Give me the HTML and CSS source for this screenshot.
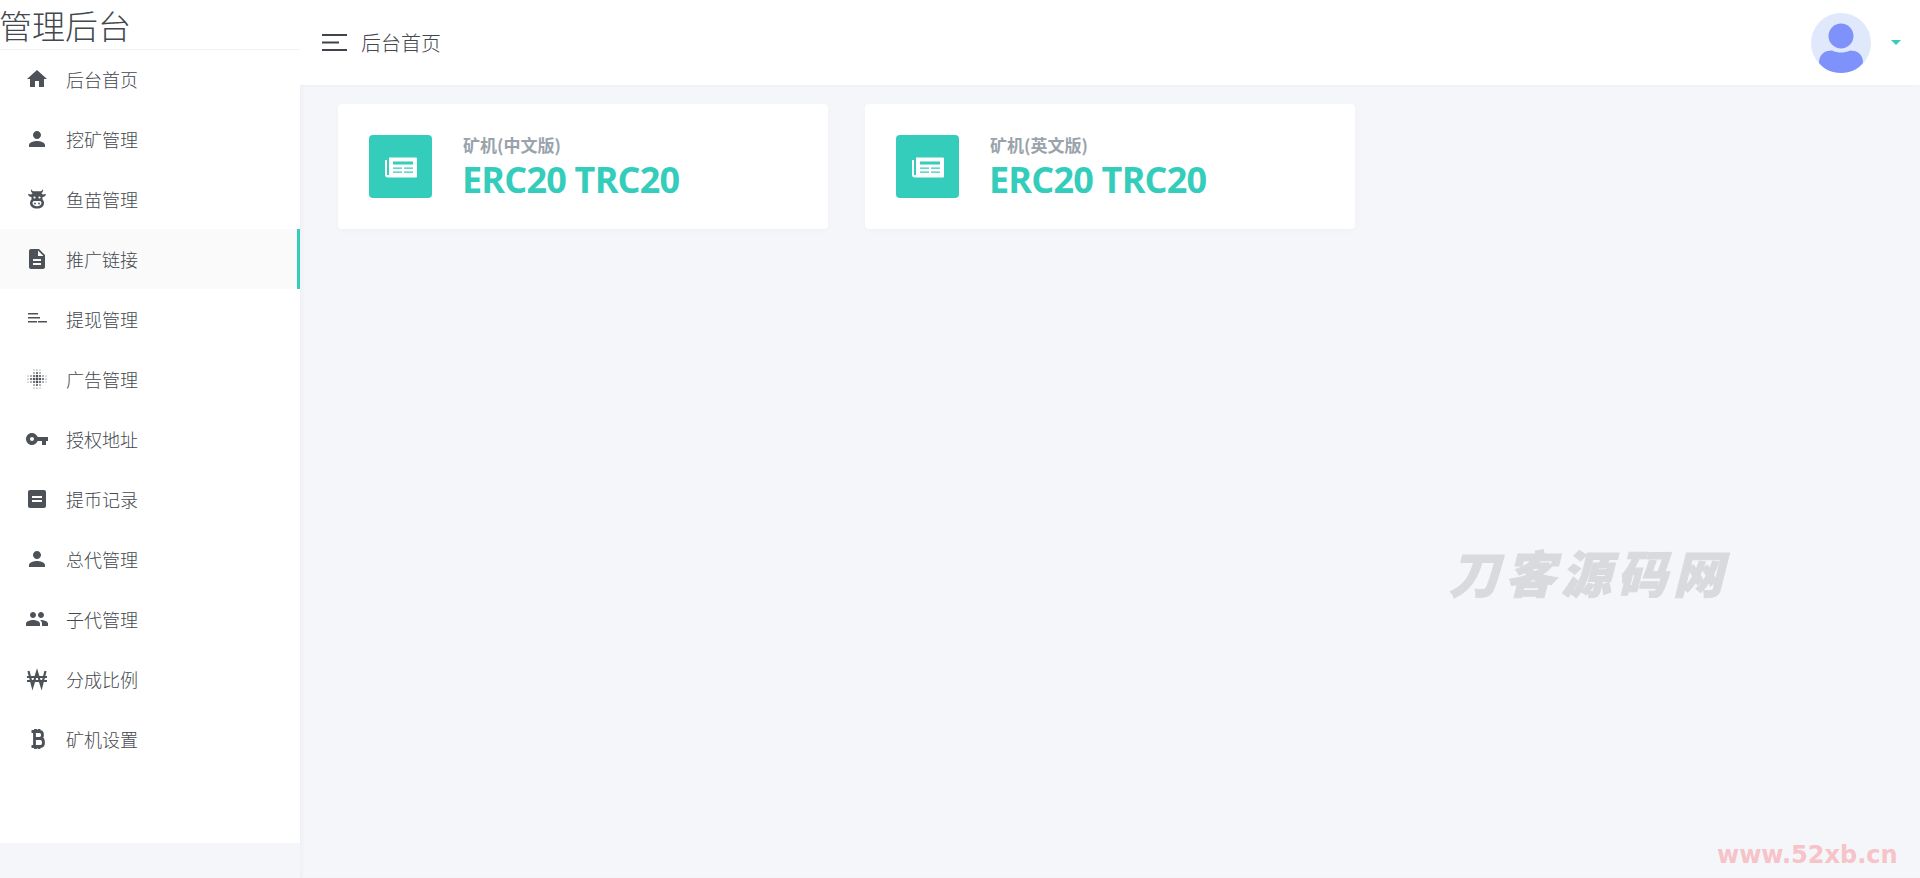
FILE: index.html

```html
<!DOCTYPE html>
<html lang="zh-CN">
<head>
  <meta charset="UTF-8">
  <title>管理后台</title>
  <link rel="stylesheet" href="styles.css">
</head>
<body>
  <aside class="sidebar">
    <div class="logo">管理后台</div>
    <ul class="menu">
      <li class="menu-item">
        <svg class="menu-icon" viewBox="0 0 24 24"><path d="M10 20v-6h4v6h5v-8h3L12 3 2 12h3v8z"/></svg>
        <span>后台首页</span>
      </li>
      <li class="menu-item">
        <svg class="menu-icon" viewBox="0 0 24 24"><path d="M12 12c2.21 0 4-1.79 4-4s-1.79-4-4-4-4 1.79-4 4 1.79 4 4 4zm0 2c-2.67 0-8 1.34-8 4v2h16v-2c0-2.66-5.33-4-8-4z"/></svg>
        <span>挖矿管理</span>
      </li>
      <li class="menu-item">
        <svg class="menu-icon" viewBox="0 0 24 24"><path d="M6 2c-.4 2 .2 3.400 1.800 4.400h8.400C17.800 5.400 18.400 4 18 2c-.5 1.200-1.300 1.900-2.500 2.200h-7C7.300 3.900 6.500 3.200 6 2zM3 7c.3 1.800 1.500 2.900 3.500 3V7.500zM21 7c-.3 1.800-1.500 2.900-3.500 3V7.500zM7.500 6.500h9c.6 0 1 .4 1 1v5c1 1 1.500 2.300 1.500 3.700 0 3-2.800 5.300-7 5.300s-7-2.300-7-5.300c0-1.400.5-2.700 1.500-3.700v-5c0-.6.4-1 1-1zM8.600 14c-.7.500-1.100 1.200-1.100 2.100 0 1.900 1.900 3.200 4.500 3.200s4.500-1.300 4.500-3.200c0-.9-.4-1.600-1.100-2.100z"/><circle cx="9.500" cy="10.500" r="1.100" fill="#fff"/><circle cx="14.500" cy="10.500" r="1.100" fill="#fff"/><circle cx="10" cy="16.500" r=".9"/><circle cx="14" cy="16.500" r=".9"/></svg>
        <span>鱼苗管理</span>
      </li>
      <li class="menu-item active">
        <svg class="menu-icon" viewBox="0 0 24 24"><path d="M14 2H6c-1.100 0-1.990.9-1.990 2L4 20c0 1.100.89 2 1.990 2H18c1.100 0 2-.9 2-2V8l-6-6zm2 16H8v-2h8v2zm0-4H8v-2h8v2zm-3-5V3.500L18.500 9H13z"/></svg>
        <span>推广链接</span>
      </li>
      <li class="menu-item">
        <svg class="menu-icon" viewBox="0 0 24 24"><path d="M3 6h10v1.600H3zM3 10h12v1.600H3zM3 14h9v1.600H3zM13 14h9v1.600h-9z"/></svg>
        <span>提现管理</span>
      </li>
      <li class="menu-item">
        <svg class="menu-icon" viewBox="0 0 24 24"><g class="dots"><circle cx="12" cy="12" r="1.400"/><circle cx="9" cy="12" r="1.300"/><circle cx="15" cy="12" r="1.300"/><circle cx="12" cy="9" r="1.300"/><circle cx="12" cy="15" r="1.300"/><circle cx="9" cy="9" r="1.100"/><circle cx="15" cy="9" r="1.100"/><circle cx="9" cy="15" r="1.100"/><circle cx="15" cy="15" r="1.100"/><circle cx="6" cy="12" r="1"/><circle cx="18" cy="12" r="1"/><circle cx="12" cy="6" r="1"/><circle cx="12" cy="18" r="1"/><circle cx="6" cy="9" r=".8"/><circle cx="18" cy="9" r=".8"/><circle cx="6" cy="15" r=".8"/><circle cx="18" cy="15" r=".8"/><circle cx="9" cy="6" r=".8"/><circle cx="15" cy="6" r=".8"/><circle cx="9" cy="18" r=".8"/><circle cx="15" cy="18" r=".8"/><circle cx="3" cy="12" r=".6"/><circle cx="21" cy="12" r=".6"/><circle cx="12" cy="3" r=".6"/><circle cx="12" cy="21" r=".6"/><circle cx="3" cy="9" r=".5"/><circle cx="21" cy="9" r=".5"/><circle cx="3" cy="15" r=".5"/><circle cx="21" cy="15" r=".5"/><circle cx="9" cy="3" r=".5"/><circle cx="15" cy="3" r=".5"/><circle cx="9" cy="21" r=".5"/><circle cx="15" cy="21" r=".5"/></g></svg>
        <span>广告管理</span>
      </li>
      <li class="menu-item">
        <svg class="menu-icon" viewBox="0 0 24 24"><path d="M12.650 10C11.830 7.670 9.610 6 7 6c-3.310 0-6 2.690-6 6s2.690 6 6 6c2.610 0 4.830-1.670 5.650-4H17v4h4v-4h2v-4H12.650zM7 14c-1.100 0-2-.9-2-2s.9-2 2-2 2 .9 2 2-.9 2-2 2z"/></svg>
        <span>授权地址</span>
      </li>
      <li class="menu-item">
        <svg class="menu-icon" viewBox="0 0 24 24"><path d="M19 3H5c-1.100 0-2 .9-2 2v14c0 1.100.9 2 2 2h14c1.100 0 2-.9 2-2V5c0-1.100-.9-2-2-2zm-2 12H7v-2h10v2zm0-4H7V9h10v2z"/></svg>
        <span>提币记录</span>
      </li>
      <li class="menu-item">
        <svg class="menu-icon" viewBox="0 0 24 24"><path d="M12 12c2.210 0 4-1.790 4-4s-1.790-4-4-4-4 1.790-4 4 1.790 4 4 4zm0 2c-2.670 0-8 1.340-8 4v2h16v-2c0-2.660-5.330-4-8-4z"/></svg>
        <span>总代管理</span>
      </li>
      <li class="menu-item">
        <svg class="menu-icon" viewBox="0 0 24 24"><path d="M16 11c1.660 0 2.990-1.340 2.990-3S17.660 5 16 5c-1.660 0-3 1.340-3 3s1.340 3 3 3zm-8 0c1.660 0 2.990-1.340 2.990-3S9.660 5 8 5C6.340 5 5 6.340 5 8s1.340 3 3 3zm0 2c-2.330 0-7 1.170-7 3.500V19h14v-2.500c0-2.330-4.670-3.500-7-3.500zm8 0c-.29 0-.62.02-.97.05 1.160.84 1.970 1.970 1.970 3.450V19h6v-2.500c0-2.330-4.670-3.500-7-3.500z"/></svg>
        <span>子代管理</span>
      </li>
      <li class="menu-item">
        <svg class="menu-icon" viewBox="0 0 24 24"><path class="line" d="M3.500 4l4 15.500L12 5l4.500 14.500 4-15.500M2 10h20M2 14h20"/></svg>
        <span>分成比例</span>
      </li>
      <li class="menu-item">
        <svg class="menu-icon" viewBox="0 0 24 24"><path class="line thick" d="M9.500 4.500v15M6.500 4.500h8c4 0 4 7 0 7h-5 6c4 0 4 8 0 8h-9M10.500 2v2.500M14 2v2.500M10.500 19.500V22M14 19.500V22"/></svg>
        <span>矿机设置</span>
      </li>
    </ul>
  </aside>

  <div class="main">
    <header class="topbar">
      <div class="topbar-left">
        <svg class="burger" viewBox="0 0 25 17"><path d="M0 1h25M0 8.500h17M0 16h25"/></svg>
        <span class="crumb">后台首页</span>
      </div>
      <div class="topbar-right">
        <svg class="avatar" viewBox="0 0 60 60">
          <circle cx="30" cy="30" r="30" fill="#e0e9fb"/>
          <circle cx="30" cy="23" r="12.500" fill="#7f92fb"/>
          <path d="M8 50c0-10 7-12.500 13-12.500 3 1.500 6 2 9 2s6-.5 9-2c6 0 13 2.500 13 12.500-5 6.500-13 10-22 10S13 56.500 8 50z" fill="#7f92fb"/>
        </svg>
        <span class="caret"></span>
      </div>
    </header>

    <section class="cards">
      <div class="card">
        <div class="card-icon">
          <svg viewBox="0 0 32 22"><path d="M4 1.500h27a1 1 0 0 1 1 1v18a1 1 0 0 1-1 1H3a3 3 0 0 1-3-3V4h2v15h2z" fill="#fff"/><path d="M8 5.500h20v3H8zM8 11.500h9v1.300H8zM19 11.500h9v1.300h-9zM8 15.500h9v1.300H8zM19 15.500h9v1.300h-9z" fill="#34ccbb"/></svg>
        </div>
        <div class="card-text">
          <div class="card-label">矿机(中文版)</div>
          <div class="card-value">ERC20 TRC20</div>
        </div>
      </div>
      <div class="card">
        <div class="card-icon">
          <svg viewBox="0 0 32 22"><path d="M4 1.500h27a1 1 0 0 1 1 1v18a1 1 0 0 1-1 1H3a3 3 0 0 1-3-3V4h2v15h2z" fill="#fff"/><path d="M8 5.500h20v3H8zM8 11.500h9v1.300H8zM19 11.500h9v1.300h-9zM8 15.500h9v1.300H8zM19 15.500h9v1.300h-9z" fill="#34ccbb"/></svg>
        </div>
        <div class="card-text">
          <div class="card-label">矿机(英文版)</div>
          <div class="card-value">ERC20 TRC20</div>
        </div>
      </div>
    </section>
  </div>

  <div class="mark-cn">刀客源码网</div>
  <div class="mark-url">www.52xb.cn</div>
</body>
</html>
```

FILE: styles.css

```css
* {
  box-sizing: border-box;
}
html, body {
  height: 100%;
}
body {
  margin: 0;
  display: flex;
  overflow: hidden;
  background-color: #f5f6fa;
  color: #43484e;
  font-family: "Noto Sans CJK SC", "Noto Sans", sans-serif;
  font-weight: 300;
}
.sidebar {
  width: 300px;
  height: 843px;
  flex-shrink: 0;
  background-color: #fff;
  position: relative;
  z-index: 2;
}
.logo {
  height: 50px;
  font-size: 33px;
  line-height: 50px;
  border-bottom: 1px solid #f3f3f3;
  white-space: nowrap;
  text-indent: -1px;
}
.menu {
  list-style: none;
  margin: -1px 0 0;
  padding: 0;
}
.menu-item {
  height: 60px;
  display: flex;
  align-items: center;
  padding-left: 25px;
  font-size: 18px;
}
.menu-item span {
  margin-left: 17px;
}
.menu-item.active {
  background-color: #fafafb;
  border-right: 3px solid #34ccbb;
}
.menu-icon {
  width: 24px;
  height: 24px;
  fill: #4d5259;
}
.menu-icon .line {
  fill: none;
  stroke: #4d5259;
  stroke-width: 2.2;
}
.menu-icon .thick {
  stroke-width: 2.8;
}
.main {
  flex: 1;
  min-width: 0;
  height: 100%;
  box-shadow: inset 4px 0 4px -2px rgba(0,0,0,0.03);
}
.topbar {
  height: 85px;
  background-color: #fff;
  display: flex;
  justify-content: space-between;
  align-items: center;
  padding: 0 19px 0 22px;
  box-shadow: 0 1px 4px rgba(0,0,0,0.03);
}
.topbar-left, .topbar-right {
  display: flex;
  align-items: center;
}
.burger {
  width: 25px;
  height: 17px;
  fill: none;
  stroke: #3f444a;
  stroke-width: 2;
}
.crumb {
  margin-left: 14px;
  font-size: 20px;
}
.avatar {
  width: 60px;
  height: 60px;
}
.caret {
  margin-left: 20px;
  border-top: 5px solid #34ccbb;
  border-left: 5px solid transparent;
  border-right: 5px solid transparent;
}
.cards {
  display: flex;
  gap: 37px;
  padding: 19px 38px;
}
.card {
  width: 490px;
  height: 125px;
  background-color: #fff;
  border-radius: 4px;
  box-shadow: 0 2px 6px rgba(0,0,0,0.025);
  display: flex;
  align-items: center;
  padding-left: 31px;
}
.card-icon {
  width: 63px;
  height: 63px;
  border-radius: 4px;
  background-color: #34ccbb;
  display: flex;
  align-items: center;
  justify-content: center;
}
.card-icon svg {
  width: 32px;
  height: 22px;
}
.card-text {
  margin-left: 31px;
}
.card-label {
  color: #99a3ab;
  font-size: 17px;
  font-weight: 700;
  line-height: 26px;
}
.card-value {
  color: #34ccbb;
  font-family: "Open Sans", "Noto Sans", sans-serif;
  font-size: 36px;
  font-weight: 700;
  line-height: 44px;
  letter-spacing: -0.8px;
  margin-left: -1px;
}
.mark-cn {
  position: absolute;
  left: 1449px;
  top: 535px;
  color: #d8dadd;
  font-size: 50px;
  font-weight: 900;
  font-style: italic;
  line-height: 72px;
  letter-spacing: 6px;
  white-space: nowrap;
  -webkit-text-stroke: 1px #d8dadd;
}
.mark-url {
  position: absolute;
  left: 1717px;
  top: 842px;
  color: #f5c3c8;
  font-family: "DejaVu Sans", sans-serif;
  font-size: 24px;
  font-weight: 700;
  line-height: 26px;
  white-space: nowrap;
}
```
